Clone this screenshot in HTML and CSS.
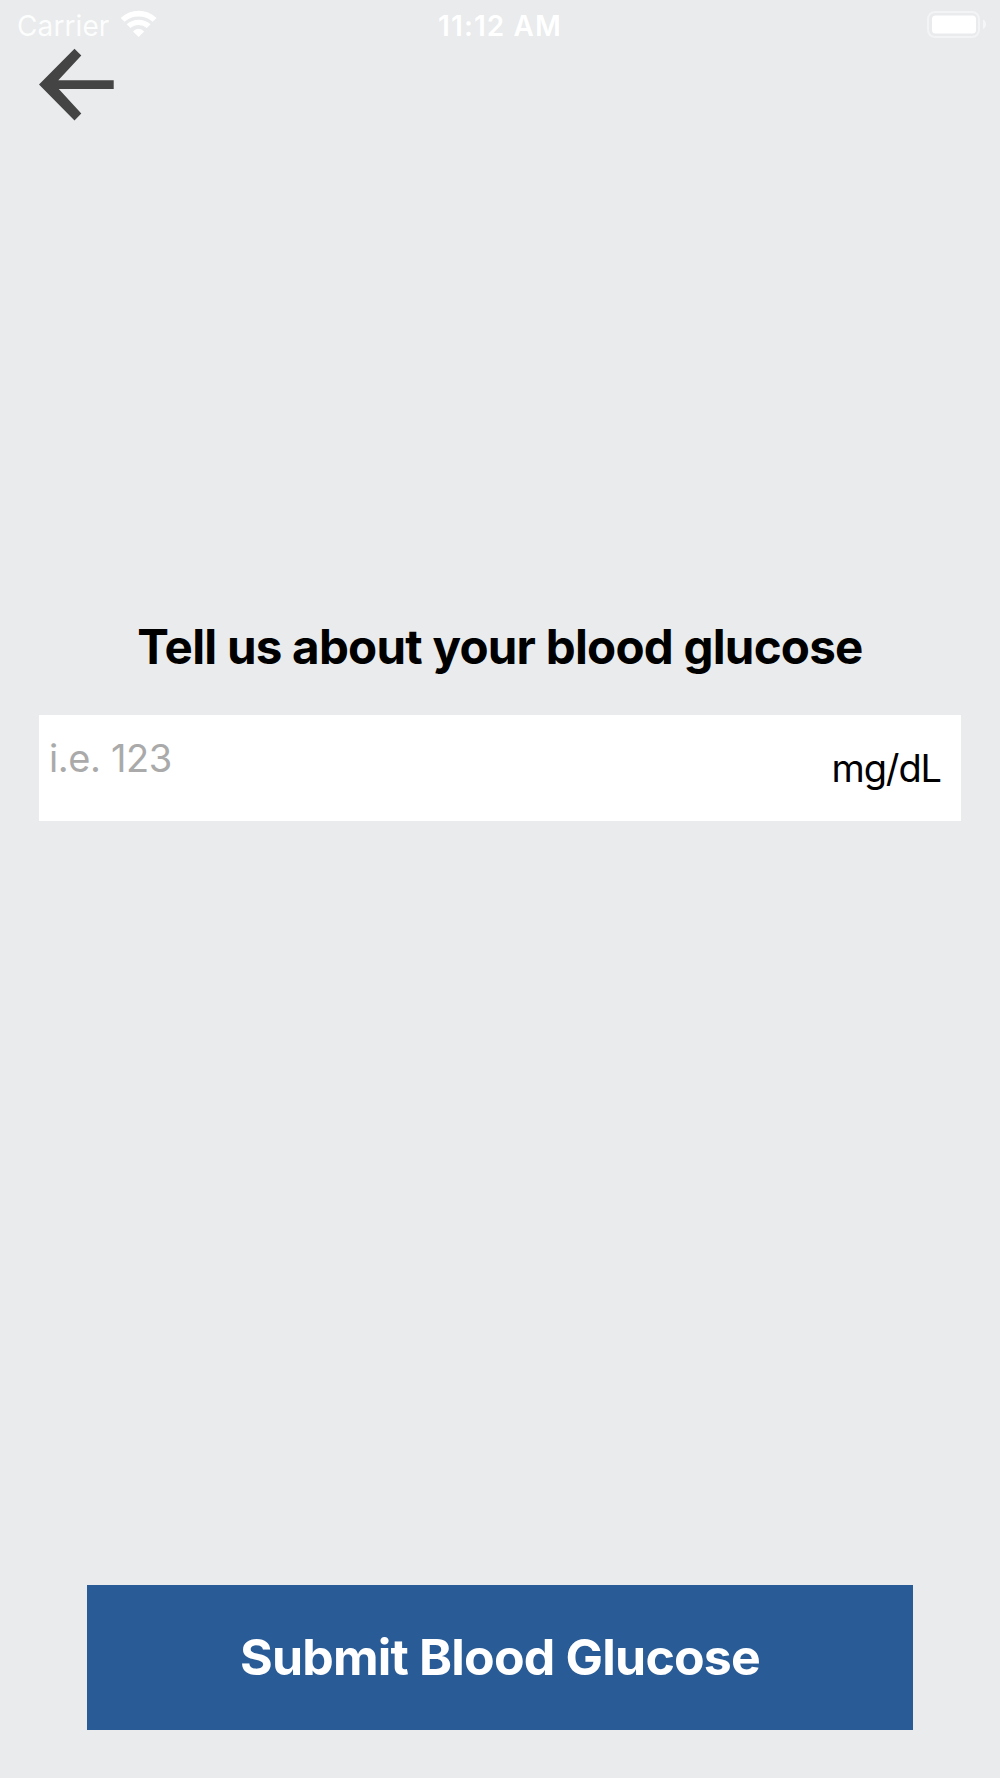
FILE: index.html
```html
<!DOCTYPE html>
<html lang="en">
<head>
    <meta charset="UTF-8">
    <title>Blood Glucose</title>
    <link rel="stylesheet" href="styles.css">
</head>
<body>
    <header class="statusBar">
        <div class="carrier">
            <span class="carrierName">Carrier</span>
            <svg class="wifi" width="38" height="28" viewBox="0 0 38 28">
                <path d="M0.7 8Q8.5 0.7 18.6 0.7T36.6 8L32.7 11.8Q26.6 6.4 18.6 6.4T4.5 11.8Z"/>
                <path d="M6.7 14.2Q11.8 9.7 18.6 9.7T30.6 14.2L26.8 18Q23.4 15 18.6 15T10.5 18Z"/>
                <path d="M13 21.4Q15.4 18.8 18.6 18.8T24.2 21.4L18.6 27Z"/>
            </svg>
        </div>
        <div class="time">11:12 AM</div>
        <svg class="battery" width="60" height="28" viewBox="0 0 60 28">
            <rect class="batteryShell" x="1" y="1" width="51" height="25" rx="7"/>
            <rect x="5" y="4.5" width="44" height="18" rx="3.5"/>
            <path class="batteryCap" d="M56 8.5Q59 10 59 13.2T56 18Z"/>
        </svg>
    </header>

    <nav>
        <button class="backButton" type="button" aria-label="Back">
            <svg width="75" height="73" viewBox="0 0 75 73">
                <path d="M0 36.5L35.5 0.7L42.3 7.5L19.3 32.3H74.7V41H19.8L42.3 65.5L35.5 72.5Z"/>
            </svg>
        </button>
    </nav>

    <form class="glucoseForm">
        <h1>Tell us about your blood glucose</h1>
        <div class="field">
            <input type="text" id="glucose" name="glucose" placeholder="i.e. 123" aria-label="Blood glucose">
            <label for="glucose">mg/dL</label>
        </div>
        <button class="submitButton" type="submit"><span>Submit Blood Glucose</span></button>
    </form>
</body>
</html>
```
FILE: styles.css
```css
* {
    box-sizing: border-box;
}

body {
    font-family: Inter, "Liberation Sans", sans-serif;
    background-color: #e9ebec;
    margin: 0;
    height: 1778px;
    display: flex;
    flex-direction: column;
}

.statusBar {
    display: grid;
    grid-template-columns: 1fr auto 1fr;
    align-items: center;
    height: 48px;
    padding: 0 13px;
    color: #fff;
    font-size: 28px;
}

.statusBar svg {
    fill: #fff;
}

.carrier {
    display: flex;
    align-items: center;
    gap: 11px;
    padding: 4px 0 0 4px;
}

.wifi {
    margin-top: -5px;
}

.carrierName {
    letter-spacing: 0.1px;
    opacity: 0.9;
}

.time {
    font-weight: 600;
    letter-spacing: 1.1px;
    padding-top: 4px;
}

.battery {
    justify-self: end;
    margin: 2px 0 0 0;
}

.statusBar .batteryShell {
    fill: none;
    stroke: #f3f4f5;
    stroke-width: 2;
}

.statusBar .batteryCap {
    fill: #f5f6f7;
}

nav {
    height: 74px;
    padding-left: 39px;
}

button {
    border: none;
    padding: 0;
    font-family: inherit;
    cursor: pointer;
}

.backButton {
    display: block;
    background: none;
}

.backButton svg {
    display: block;
    fill: #444;
}

.glucoseForm {
    flex: 1;
    display: flex;
    flex-direction: column;
    align-items: center;
    padding: 493px 39px 48px;
}

h1 {
    margin: 0 0 37px;
    font-size: 47.5px;
    line-height: 63px;
    letter-spacing: -0.75px;
    font-weight: 700;
    white-space: nowrap;
}

.field {
    display: flex;
    align-items: center;
    width: 100%;
    height: 106px;
    padding: 0 20px 0 10px;
    background-color: #fff;
}

.field input {
    flex: 1;
    min-width: 0;
    height: 46px;
    margin: 0 0 21px;
    padding: 0;
    border: none;
    outline: none;
    background: none;
    font-family: inherit;
    font-size: 38px;
    letter-spacing: -0.4px;
}

.field input::placeholder {
    color: #aaa;
}

.field label {
    font-size: 38px;
    letter-spacing: -1.1px;
}

.submitButton {
    width: 826px;
    height: 145px;
    margin-top: auto;
    padding-bottom: 2px;
    background-color: #295c96;
    color: #fff;
    font-size: 50px;
    font-weight: 700;
    letter-spacing: -0.8px;
}
```
